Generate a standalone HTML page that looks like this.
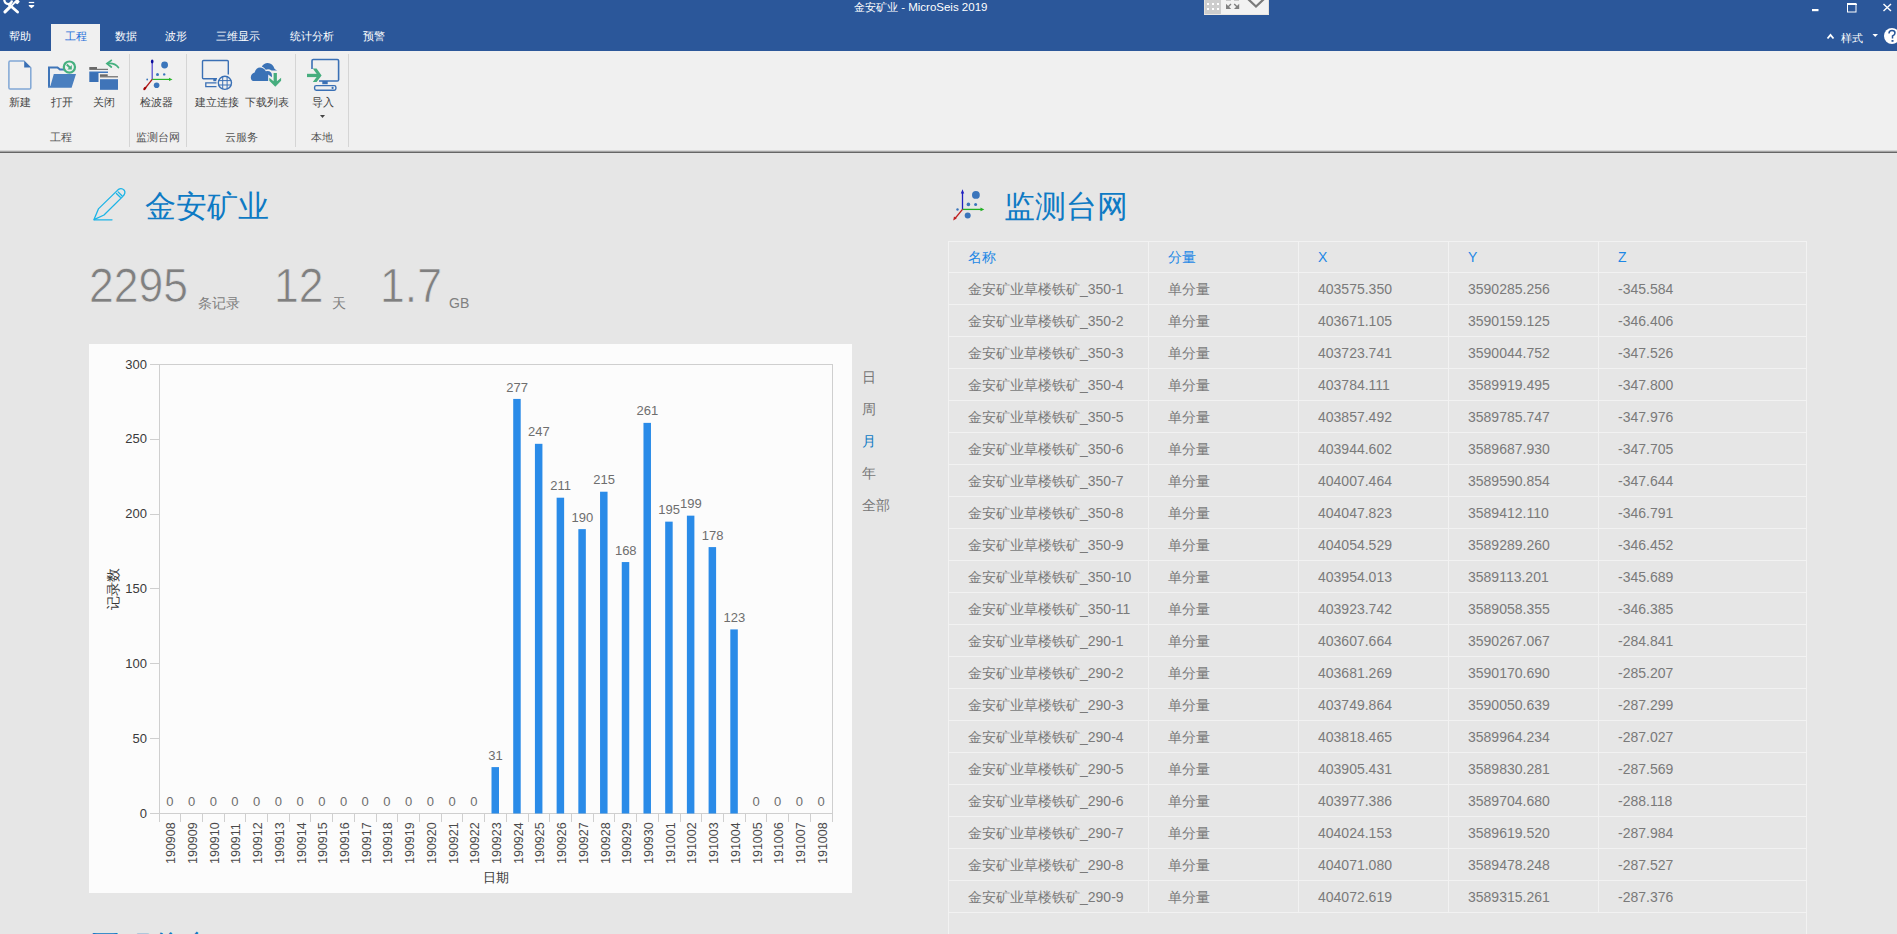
<!DOCTYPE html>
<html><head><meta charset="utf-8">
<style>
*{margin:0;padding:0;box-sizing:border-box}
html,body{width:1897px;height:934px;overflow:hidden;background:#e6e6e6;font-family:"Liberation Sans",sans-serif;position:relative}
.a{position:absolute;white-space:nowrap}
#top{position:absolute;left:0;top:0;width:1897px;height:51px;background:#2b579a}
#ribbon{position:absolute;left:0;top:51px;width:1897px;height:99px;background:#f0f0f0}
#rline{position:absolute;left:0;top:150px;width:1897px;height:3px;background:linear-gradient(#d6d6d6 0,#d6d6d6 1px,#a4a4a4 1px,#a4a4a4 2px,#666 2px,#666 3px)}
.tab{position:absolute;top:28px;font-size:11.3px;color:#fff;line-height:16px}
.rl{position:absolute;top:94px;font-size:11.3px;color:#444;line-height:16px}
.gl{position:absolute;top:129px;font-size:11.3px;color:#555;line-height:16px}
.sep{position:absolute;top:54px;width:1px;height:93px;background:#d5d5d5}
.th{position:absolute;top:248px;font-size:14px;color:#1e88e5;line-height:18px;white-space:nowrap}
.td{position:absolute;font-size:14px;color:#7a7a7a;line-height:17px;white-space:nowrap}
.vl{font-family:"Liberation Sans",sans-serif;font-size:13px;fill:#6e6e6e}
.xl{font-family:"Liberation Sans",sans-serif;font-size:12.5px;fill:#4a4a4a}
.yl{font-family:"Liberation Sans",sans-serif;font-size:13px;fill:#3a3a3a}
.al{font-family:"Liberation Sans",sans-serif;font-size:13px;fill:#3a3a3a}
.side{position:absolute;left:862px;font-size:14px;color:#777;line-height:16px}
</style></head><body>
<div id="top"></div>
<div id="ribbon"></div>
<div id="rline"></div>
<!-- title -->
<div class="a" style="left:854px;top:0px;font-size:11.3px;color:#fff;line-height:15px">金安矿业 <span style="font-size:11.5px">- MicroSeis 2019</span></div>
<!-- tabs -->
<div class="a" style="left:51px;top:24px;width:49px;height:27px;background:#f0f0f0"></div>
<div class="tab" style="left:9px">帮助</div>
<div class="tab" style="left:65px;color:#1e6fd9">工程</div>
<div class="tab" style="left:115px">数据</div>
<div class="tab" style="left:165px">波形</div>
<div class="tab" style="left:216px">三维显示</div>
<div class="tab" style="left:290px">统计分析</div>
<div class="tab" style="left:363px">预警</div>
<!-- ribbon labels -->
<div class="rl" style="left:9px">新建</div>
<div class="rl" style="left:51px">打开</div>
<div class="rl" style="left:93px">关闭</div>
<div class="rl" style="left:140px">检波器</div>
<div class="rl" style="left:195px">建立连接</div>
<div class="rl" style="left:245px">下载列表</div>
<div class="rl" style="left:312px">导入</div>
<div class="gl" style="left:50px">工程</div>
<div class="gl" style="left:136px">监测台网</div>
<div class="gl" style="left:225px">云服务</div>
<div class="gl" style="left:311px">本地</div>
<div class="sep" style="left:129px"></div>
<div class="sep" style="left:186px"></div>
<div class="sep" style="left:295px"></div>
<div class="sep" style="left:348px"></div>

<!-- headings -->
<div class="a" style="left:145px;top:187px;font-size:31.2px;color:#0e7ac4;line-height:40px">金安矿业</div>
<div class="a" style="left:1004px;top:187px;font-size:31.2px;color:#0e7ac4;line-height:40px">监测台网</div>
<div class="a" style="left:89px;top:260px;font-size:48.4px;color:#808080;line-height:50px;transform:scaleX(.92);transform-origin:0 0;-webkit-text-stroke:0.7px #e6e6e6">2295</div>
<div class="a" style="left:198px;top:295px;font-size:14px;color:#808080;line-height:16px">条记录</div>
<div class="a" style="left:274px;top:260px;font-size:48.4px;color:#808080;line-height:50px;transform:scaleX(.92);transform-origin:0 0;-webkit-text-stroke:0.7px #e6e6e6">12</div>
<div class="a" style="left:332px;top:295px;font-size:14px;color:#808080;line-height:16px">天</div>
<div class="a" style="left:380px;top:260px;font-size:48.4px;color:#808080;line-height:50px;transform:scaleX(.92);transform-origin:0 0;-webkit-text-stroke:0.7px #e6e6e6">1.7</div>
<div class="a" style="left:449px;top:295px;font-size:14px;color:#808080;line-height:16px">GB</div>

<!-- chart panel -->
<div class="a" style="left:89px;top:344px;width:763px;height:549px;background:#fcfcfc"></div>

<!-- table -->
<div class="a" style="left:948px;top:241px;width:859px;height:1px;background:#f2f2f2"></div>
<div class="a" style="left:948px;top:241px;width:1px;height:700px;background:#f2f2f2"></div>
<div class="a" style="left:1806px;top:241px;width:1px;height:700px;background:#f2f2f2"></div>
<div class="a" style="left:1148px;top:241px;width:1px;height:672px;background:#f2f2f2"></div>
<div class="a" style="left:1298px;top:241px;width:1px;height:672px;background:#f2f2f2"></div>
<div class="a" style="left:1448px;top:241px;width:1px;height:672px;background:#f2f2f2"></div>
<div class="a" style="left:1598px;top:241px;width:1px;height:672px;background:#f2f2f2"></div>
<div class="a" style="left:948px;top:272px;width:859px;height:1px;background:#f2f2f2"></div>
<div class="a" style="left:948px;top:304px;width:859px;height:1px;background:#f2f2f2"></div>
<div class="a" style="left:948px;top:336px;width:859px;height:1px;background:#f2f2f2"></div>
<div class="a" style="left:948px;top:368px;width:859px;height:1px;background:#f2f2f2"></div>
<div class="a" style="left:948px;top:400px;width:859px;height:1px;background:#f2f2f2"></div>
<div class="a" style="left:948px;top:432px;width:859px;height:1px;background:#f2f2f2"></div>
<div class="a" style="left:948px;top:464px;width:859px;height:1px;background:#f2f2f2"></div>
<div class="a" style="left:948px;top:496px;width:859px;height:1px;background:#f2f2f2"></div>
<div class="a" style="left:948px;top:528px;width:859px;height:1px;background:#f2f2f2"></div>
<div class="a" style="left:948px;top:560px;width:859px;height:1px;background:#f2f2f2"></div>
<div class="a" style="left:948px;top:592px;width:859px;height:1px;background:#f2f2f2"></div>
<div class="a" style="left:948px;top:624px;width:859px;height:1px;background:#f2f2f2"></div>
<div class="a" style="left:948px;top:656px;width:859px;height:1px;background:#f2f2f2"></div>
<div class="a" style="left:948px;top:688px;width:859px;height:1px;background:#f2f2f2"></div>
<div class="a" style="left:948px;top:720px;width:859px;height:1px;background:#f2f2f2"></div>
<div class="a" style="left:948px;top:752px;width:859px;height:1px;background:#f2f2f2"></div>
<div class="a" style="left:948px;top:784px;width:859px;height:1px;background:#f2f2f2"></div>
<div class="a" style="left:948px;top:816px;width:859px;height:1px;background:#f2f2f2"></div>
<div class="a" style="left:948px;top:848px;width:859px;height:1px;background:#f2f2f2"></div>
<div class="a" style="left:948px;top:880px;width:859px;height:1px;background:#f2f2f2"></div>
<div class="a" style="left:948px;top:912px;width:859px;height:1px;background:#f2f2f2"></div>
<div class="th" style="left:968px">名称</div>
<div class="th" style="left:1168px">分量</div>
<div class="th" style="left:1318px">X</div>
<div class="th" style="left:1468px">Y</div>
<div class="th" style="left:1618px">Z</div>
<div class="td" style="left:968px;top:281px">金安矿业草楼铁矿_350-1</div>
<div class="td" style="left:1168px;top:281px">单分量</div>
<div class="td" style="left:1318px;top:281px">403575.350</div>
<div class="td" style="left:1468px;top:281px">3590285.256</div>
<div class="td" style="left:1618px;top:281px">-345.584</div>
<div class="td" style="left:968px;top:313px">金安矿业草楼铁矿_350-2</div>
<div class="td" style="left:1168px;top:313px">单分量</div>
<div class="td" style="left:1318px;top:313px">403671.105</div>
<div class="td" style="left:1468px;top:313px">3590159.125</div>
<div class="td" style="left:1618px;top:313px">-346.406</div>
<div class="td" style="left:968px;top:345px">金安矿业草楼铁矿_350-3</div>
<div class="td" style="left:1168px;top:345px">单分量</div>
<div class="td" style="left:1318px;top:345px">403723.741</div>
<div class="td" style="left:1468px;top:345px">3590044.752</div>
<div class="td" style="left:1618px;top:345px">-347.526</div>
<div class="td" style="left:968px;top:377px">金安矿业草楼铁矿_350-4</div>
<div class="td" style="left:1168px;top:377px">单分量</div>
<div class="td" style="left:1318px;top:377px">403784.111</div>
<div class="td" style="left:1468px;top:377px">3589919.495</div>
<div class="td" style="left:1618px;top:377px">-347.800</div>
<div class="td" style="left:968px;top:409px">金安矿业草楼铁矿_350-5</div>
<div class="td" style="left:1168px;top:409px">单分量</div>
<div class="td" style="left:1318px;top:409px">403857.492</div>
<div class="td" style="left:1468px;top:409px">3589785.747</div>
<div class="td" style="left:1618px;top:409px">-347.976</div>
<div class="td" style="left:968px;top:441px">金安矿业草楼铁矿_350-6</div>
<div class="td" style="left:1168px;top:441px">单分量</div>
<div class="td" style="left:1318px;top:441px">403944.602</div>
<div class="td" style="left:1468px;top:441px">3589687.930</div>
<div class="td" style="left:1618px;top:441px">-347.705</div>
<div class="td" style="left:968px;top:473px">金安矿业草楼铁矿_350-7</div>
<div class="td" style="left:1168px;top:473px">单分量</div>
<div class="td" style="left:1318px;top:473px">404007.464</div>
<div class="td" style="left:1468px;top:473px">3589590.854</div>
<div class="td" style="left:1618px;top:473px">-347.644</div>
<div class="td" style="left:968px;top:505px">金安矿业草楼铁矿_350-8</div>
<div class="td" style="left:1168px;top:505px">单分量</div>
<div class="td" style="left:1318px;top:505px">404047.823</div>
<div class="td" style="left:1468px;top:505px">3589412.110</div>
<div class="td" style="left:1618px;top:505px">-346.791</div>
<div class="td" style="left:968px;top:537px">金安矿业草楼铁矿_350-9</div>
<div class="td" style="left:1168px;top:537px">单分量</div>
<div class="td" style="left:1318px;top:537px">404054.529</div>
<div class="td" style="left:1468px;top:537px">3589289.260</div>
<div class="td" style="left:1618px;top:537px">-346.452</div>
<div class="td" style="left:968px;top:569px">金安矿业草楼铁矿_350-10</div>
<div class="td" style="left:1168px;top:569px">单分量</div>
<div class="td" style="left:1318px;top:569px">403954.013</div>
<div class="td" style="left:1468px;top:569px">3589113.201</div>
<div class="td" style="left:1618px;top:569px">-345.689</div>
<div class="td" style="left:968px;top:601px">金安矿业草楼铁矿_350-11</div>
<div class="td" style="left:1168px;top:601px">单分量</div>
<div class="td" style="left:1318px;top:601px">403923.742</div>
<div class="td" style="left:1468px;top:601px">3589058.355</div>
<div class="td" style="left:1618px;top:601px">-346.385</div>
<div class="td" style="left:968px;top:633px">金安矿业草楼铁矿_290-1</div>
<div class="td" style="left:1168px;top:633px">单分量</div>
<div class="td" style="left:1318px;top:633px">403607.664</div>
<div class="td" style="left:1468px;top:633px">3590267.067</div>
<div class="td" style="left:1618px;top:633px">-284.841</div>
<div class="td" style="left:968px;top:665px">金安矿业草楼铁矿_290-2</div>
<div class="td" style="left:1168px;top:665px">单分量</div>
<div class="td" style="left:1318px;top:665px">403681.269</div>
<div class="td" style="left:1468px;top:665px">3590170.690</div>
<div class="td" style="left:1618px;top:665px">-285.207</div>
<div class="td" style="left:968px;top:697px">金安矿业草楼铁矿_290-3</div>
<div class="td" style="left:1168px;top:697px">单分量</div>
<div class="td" style="left:1318px;top:697px">403749.864</div>
<div class="td" style="left:1468px;top:697px">3590050.639</div>
<div class="td" style="left:1618px;top:697px">-287.299</div>
<div class="td" style="left:968px;top:729px">金安矿业草楼铁矿_290-4</div>
<div class="td" style="left:1168px;top:729px">单分量</div>
<div class="td" style="left:1318px;top:729px">403818.465</div>
<div class="td" style="left:1468px;top:729px">3589964.234</div>
<div class="td" style="left:1618px;top:729px">-287.027</div>
<div class="td" style="left:968px;top:761px">金安矿业草楼铁矿_290-5</div>
<div class="td" style="left:1168px;top:761px">单分量</div>
<div class="td" style="left:1318px;top:761px">403905.431</div>
<div class="td" style="left:1468px;top:761px">3589830.281</div>
<div class="td" style="left:1618px;top:761px">-287.569</div>
<div class="td" style="left:968px;top:793px">金安矿业草楼铁矿_290-6</div>
<div class="td" style="left:1168px;top:793px">单分量</div>
<div class="td" style="left:1318px;top:793px">403977.386</div>
<div class="td" style="left:1468px;top:793px">3589704.680</div>
<div class="td" style="left:1618px;top:793px">-288.118</div>
<div class="td" style="left:968px;top:825px">金安矿业草楼铁矿_290-7</div>
<div class="td" style="left:1168px;top:825px">单分量</div>
<div class="td" style="left:1318px;top:825px">404024.153</div>
<div class="td" style="left:1468px;top:825px">3589619.520</div>
<div class="td" style="left:1618px;top:825px">-287.984</div>
<div class="td" style="left:968px;top:857px">金安矿业草楼铁矿_290-8</div>
<div class="td" style="left:1168px;top:857px">单分量</div>
<div class="td" style="left:1318px;top:857px">404071.080</div>
<div class="td" style="left:1468px;top:857px">3589478.248</div>
<div class="td" style="left:1618px;top:857px">-287.527</div>
<div class="td" style="left:968px;top:889px">金安矿业草楼铁矿_290-9</div>
<div class="td" style="left:1168px;top:889px">单分量</div>
<div class="td" style="left:1318px;top:889px">404072.619</div>
<div class="td" style="left:1468px;top:889px">3589315.261</div>
<div class="td" style="left:1618px;top:889px">-287.376</div>
<svg class="a" style="left:0;top:0" width="1897" height="934" viewBox="0 0 1897 934">
<path d="M159.5 364V813.5M150 364.5H833M832.5 364V822M150 813.5H833" stroke="#cfcfcf" stroke-width="1" fill="none"/>
<path d="M150 738.5H159" stroke="#cfcfcf" stroke-width="1"/>
<path d="M150 663.5H159" stroke="#cfcfcf" stroke-width="1"/>
<path d="M150 588.5H159" stroke="#cfcfcf" stroke-width="1"/>
<path d="M150 514.5H159" stroke="#cfcfcf" stroke-width="1"/>
<path d="M150 439.5H159" stroke="#cfcfcf" stroke-width="1"/>
<path d="M159.5 813.5V822" stroke="#cfcfcf" stroke-width="1"/>
<path d="M180.5 813.5V822" stroke="#cfcfcf" stroke-width="1"/>
<path d="M202.5 813.5V822" stroke="#cfcfcf" stroke-width="1"/>
<path d="M224.5 813.5V822" stroke="#cfcfcf" stroke-width="1"/>
<path d="M245.5 813.5V822" stroke="#cfcfcf" stroke-width="1"/>
<path d="M267.5 813.5V822" stroke="#cfcfcf" stroke-width="1"/>
<path d="M289.5 813.5V822" stroke="#cfcfcf" stroke-width="1"/>
<path d="M310.5 813.5V822" stroke="#cfcfcf" stroke-width="1"/>
<path d="M332.5 813.5V822" stroke="#cfcfcf" stroke-width="1"/>
<path d="M354.5 813.5V822" stroke="#cfcfcf" stroke-width="1"/>
<path d="M376.5 813.5V822" stroke="#cfcfcf" stroke-width="1"/>
<path d="M397.5 813.5V822" stroke="#cfcfcf" stroke-width="1"/>
<path d="M419.5 813.5V822" stroke="#cfcfcf" stroke-width="1"/>
<path d="M441.5 813.5V822" stroke="#cfcfcf" stroke-width="1"/>
<path d="M462.5 813.5V822" stroke="#cfcfcf" stroke-width="1"/>
<path d="M484.5 813.5V822" stroke="#cfcfcf" stroke-width="1"/>
<path d="M506.5 813.5V822" stroke="#cfcfcf" stroke-width="1"/>
<path d="M528.5 813.5V822" stroke="#cfcfcf" stroke-width="1"/>
<path d="M549.5 813.5V822" stroke="#cfcfcf" stroke-width="1"/>
<path d="M571.5 813.5V822" stroke="#cfcfcf" stroke-width="1"/>
<path d="M593.5 813.5V822" stroke="#cfcfcf" stroke-width="1"/>
<path d="M614.5 813.5V822" stroke="#cfcfcf" stroke-width="1"/>
<path d="M636.5 813.5V822" stroke="#cfcfcf" stroke-width="1"/>
<path d="M658.5 813.5V822" stroke="#cfcfcf" stroke-width="1"/>
<path d="M680.5 813.5V822" stroke="#cfcfcf" stroke-width="1"/>
<path d="M701.5 813.5V822" stroke="#cfcfcf" stroke-width="1"/>
<path d="M723.5 813.5V822" stroke="#cfcfcf" stroke-width="1"/>
<path d="M745.5 813.5V822" stroke="#cfcfcf" stroke-width="1"/>
<path d="M766.5 813.5V822" stroke="#cfcfcf" stroke-width="1"/>
<path d="M788.5 813.5V822" stroke="#cfcfcf" stroke-width="1"/>
<path d="M810.5 813.5V822" stroke="#cfcfcf" stroke-width="1"/>
<path d="M832.5 813.5V822" stroke="#cfcfcf" stroke-width="1"/>
<text x="169.85" y="806.10" class="vl" text-anchor="middle">0</text>
<text transform="translate(175.35,864) rotate(-90)" class="xl">190908</text>
<text x="191.56" y="806.10" class="vl" text-anchor="middle">0</text>
<text transform="translate(197.06,864) rotate(-90)" class="xl">190909</text>
<text x="213.27" y="806.10" class="vl" text-anchor="middle">0</text>
<text transform="translate(218.77,864) rotate(-90)" class="xl">190910</text>
<text x="234.98" y="806.10" class="vl" text-anchor="middle">0</text>
<text transform="translate(240.48,864) rotate(-90)" class="xl">190911</text>
<text x="256.69" y="806.10" class="vl" text-anchor="middle">0</text>
<text transform="translate(262.19,864) rotate(-90)" class="xl">190912</text>
<text x="278.40" y="806.10" class="vl" text-anchor="middle">0</text>
<text transform="translate(283.90,864) rotate(-90)" class="xl">190913</text>
<text x="300.11" y="806.10" class="vl" text-anchor="middle">0</text>
<text transform="translate(305.61,864) rotate(-90)" class="xl">190914</text>
<text x="321.82" y="806.10" class="vl" text-anchor="middle">0</text>
<text transform="translate(327.32,864) rotate(-90)" class="xl">190915</text>
<text x="343.53" y="806.10" class="vl" text-anchor="middle">0</text>
<text transform="translate(349.03,864) rotate(-90)" class="xl">190916</text>
<text x="365.24" y="806.10" class="vl" text-anchor="middle">0</text>
<text transform="translate(370.74,864) rotate(-90)" class="xl">190917</text>
<text x="386.95" y="806.10" class="vl" text-anchor="middle">0</text>
<text transform="translate(392.45,864) rotate(-90)" class="xl">190918</text>
<text x="408.66" y="806.10" class="vl" text-anchor="middle">0</text>
<text transform="translate(414.16,864) rotate(-90)" class="xl">190919</text>
<text x="430.37" y="806.10" class="vl" text-anchor="middle">0</text>
<text transform="translate(435.87,864) rotate(-90)" class="xl">190920</text>
<text x="452.08" y="806.10" class="vl" text-anchor="middle">0</text>
<text transform="translate(457.58,864) rotate(-90)" class="xl">190921</text>
<text x="473.79" y="806.10" class="vl" text-anchor="middle">0</text>
<text transform="translate(479.29,864) rotate(-90)" class="xl">190922</text>
<rect x="491.50" y="767.10" width="7.5" height="46.40" fill="#2a8be8"/>
<text x="495.50" y="759.70" class="vl" text-anchor="middle">31</text>
<text transform="translate(501.00,864) rotate(-90)" class="xl">190923</text>
<rect x="513.21" y="398.92" width="7.5" height="414.58" fill="#2a8be8"/>
<text x="517.21" y="391.52" class="vl" text-anchor="middle">277</text>
<text transform="translate(522.71,864) rotate(-90)" class="xl">190924</text>
<rect x="534.92" y="443.82" width="7.5" height="369.68" fill="#2a8be8"/>
<text x="538.92" y="436.42" class="vl" text-anchor="middle">247</text>
<text transform="translate(544.42,864) rotate(-90)" class="xl">190925</text>
<rect x="556.63" y="497.70" width="7.5" height="315.80" fill="#2a8be8"/>
<text x="560.63" y="490.30" class="vl" text-anchor="middle">211</text>
<text transform="translate(566.13,864) rotate(-90)" class="xl">190926</text>
<rect x="578.34" y="529.13" width="7.5" height="284.37" fill="#2a8be8"/>
<text x="582.34" y="521.73" class="vl" text-anchor="middle">190</text>
<text transform="translate(587.84,864) rotate(-90)" class="xl">190927</text>
<rect x="600.05" y="491.72" width="7.5" height="321.78" fill="#2a8be8"/>
<text x="604.05" y="484.32" class="vl" text-anchor="middle">215</text>
<text transform="translate(609.55,864) rotate(-90)" class="xl">190928</text>
<rect x="621.76" y="562.06" width="7.5" height="251.44" fill="#2a8be8"/>
<text x="625.76" y="554.66" class="vl" text-anchor="middle">168</text>
<text transform="translate(631.26,864) rotate(-90)" class="xl">190929</text>
<rect x="643.47" y="422.87" width="7.5" height="390.63" fill="#2a8be8"/>
<text x="647.47" y="415.47" class="vl" text-anchor="middle">261</text>
<text transform="translate(652.97,864) rotate(-90)" class="xl">190930</text>
<rect x="665.18" y="521.65" width="7.5" height="291.85" fill="#2a8be8"/>
<text x="669.18" y="514.25" class="vl" text-anchor="middle">195</text>
<text transform="translate(674.68,864) rotate(-90)" class="xl">191001</text>
<rect x="686.89" y="515.66" width="7.5" height="297.84" fill="#2a8be8"/>
<text x="690.89" y="508.26" class="vl" text-anchor="middle">199</text>
<text transform="translate(696.39,864) rotate(-90)" class="xl">191002</text>
<rect x="708.60" y="547.09" width="7.5" height="266.41" fill="#2a8be8"/>
<text x="712.60" y="539.69" class="vl" text-anchor="middle">178</text>
<text transform="translate(718.10,864) rotate(-90)" class="xl">191003</text>
<rect x="730.31" y="629.41" width="7.5" height="184.09" fill="#2a8be8"/>
<text x="734.31" y="622.01" class="vl" text-anchor="middle">123</text>
<text transform="translate(739.81,864) rotate(-90)" class="xl">191004</text>
<text x="756.02" y="806.10" class="vl" text-anchor="middle">0</text>
<text transform="translate(761.52,864) rotate(-90)" class="xl">191005</text>
<text x="777.73" y="806.10" class="vl" text-anchor="middle">0</text>
<text transform="translate(783.23,864) rotate(-90)" class="xl">191006</text>
<text x="799.44" y="806.10" class="vl" text-anchor="middle">0</text>
<text transform="translate(804.94,864) rotate(-90)" class="xl">191007</text>
<text x="821.15" y="806.10" class="vl" text-anchor="middle">0</text>
<text transform="translate(826.65,864) rotate(-90)" class="xl">191008</text>
<text x="147" y="818.0" class="yl" text-anchor="end">0</text>
<text x="147" y="743.1" class="yl" text-anchor="end">50</text>
<text x="147" y="668.2" class="yl" text-anchor="end">100</text>
<text x="147" y="593.2" class="yl" text-anchor="end">150</text>
<text x="147" y="518.3" class="yl" text-anchor="end">200</text>
<text x="147" y="443.4" class="yl" text-anchor="end">250</text>
<text x="147" y="368.5" class="yl" text-anchor="end">300</text>
<text transform="translate(117.5,609.5) rotate(-90)" class="al" style="font-size:14px">记录数</text>
<text x="483" y="882" class="al">日期</text>
</svg>
<div class="side" style="top:369px">日</div>
<div class="side" style="top:401px">周</div>
<div class="side" style="top:433px;color:#0e7ac4">月</div>
<div class="side" style="top:465px">年</div>
<div class="side" style="top:497px">全部</div>
<div class="a" style="left:90px;top:927px;font-size:31.2px;color:#0e7ac4;line-height:40px">工程信息</div>
<div class="a" style="left:1841px;top:31px;font-size:11px;color:#fff;line-height:14px">样式</div>
<svg class="a" style="left:0;top:0" width="1897" height="160" viewBox="0 0 1897 160">
 <!-- tools icon -->
 <path d="M9 4.5 L17.6 12" stroke="#fff" stroke-width="2.8" stroke-linecap="round"/>
 <path d="M4.2 -0.5 Q4.5 3.8 8.6 4.2 Q11.4 4 12 0.5" stroke="#fff" stroke-width="2.2" fill="none"/>
 <path d="M5 11.8 L9.8 7.2" stroke="#fff" stroke-width="3.2" stroke-linecap="round"/>
 <path d="M9.5 7.5 L14.5 2.8" stroke="#fff" stroke-width="1.8"/>
 <path d="M13.2 2.6 L16.5 -0.5 L18.2 -0.2 L19.8 1.8 L17.6 4.2 L15.8 3.6Z" fill="#fff"/>
 <rect x="28.8" y="1.9" width="5.4" height="1.2" fill="#fff"/>
 <path d="M28.8 4.9 H34.2 V5.9 L31.5 8.2 L28.8 5.9Z" fill="#fff"/>
 <!-- layout widget -->
 <rect x="1204" y="0" width="65" height="15" fill="#f2f2f2"/>
 <rect x="1204" y="0" width="17" height="14" fill="#cdcdcd"/>
 <path d="M1204.5 0V15M1268.5 0V15" stroke="#e4e0da" stroke-width="1"/>
 <path d="M1204 14.5H1269" stroke="#ece8e2" stroke-width="1"/>
 <g fill="#fff"><rect x="1207" y="3" width="2" height="2"/><rect x="1212" y="3" width="2" height="2"/><rect x="1217" y="3" width="2" height="2"/><rect x="1207" y="8" width="2" height="2"/><rect x="1212" y="8" width="2" height="2"/><rect x="1217" y="8" width="2" height="2"/></g>
 <g fill="#808080"><path d="M1226 3.8V9H1231.2Z M1239.2 3.8V9H1234Z"/></g><path d="M1227.5 7.5L1231 4 M1237.7 7.5L1234.2 4" stroke="#808080" stroke-width="1.4"/><path d="M1226 0.5H1231M1234 0.5H1239" stroke="#c8c8c8" stroke-width="1"/>
 <path d="M1248 -1L1256 6.5L1264 -1" stroke="#7a7a7a" stroke-width="2.2" fill="none"/>
 <!-- window controls -->
 <rect x="1812" y="9" width="6.5" height="2.2" fill="#fff"/>
 <rect x="1847.5" y="3.5" width="8.5" height="8.5" stroke="#fff" stroke-width="1" fill="none"/>
 <path d="M1847 4.5H1857" stroke="#fff" stroke-width="1"/>
 <path d="M1883.5 4L1891 11M1891 4L1883.5 11" stroke="#fff" stroke-width="1.4"/>
 <path d="M1827.5 38.5L1830.5 35L1833.5 38.5" stroke="#fff" stroke-width="1.8" fill="none"/>
 <path d="M1872.5 34H1878L1875.2 37Z" fill="#fff"/>
 <circle cx="1892" cy="36" r="8" fill="#fff"/>
 <path d="M1889 33.5 Q1889 30.5 1892 30.5 Q1895 30.5 1895 33 Q1895 35 1892.5 36 V38.5" stroke="#2b579a" stroke-width="1.5" fill="none"/>
 <rect x="1891.5" y="40" width="2" height="1.8" fill="#2b579a"/>

 <!-- 新建 doc -->
 <path d="M24.3 61.1 H10.2 Q8.9 61.1 8.9 62.4 V87.7 Q8.9 89 10.2 89 H29.5 Q30.8 89 30.8 87.7 V67.5" stroke="#80a7d5" stroke-width="1.5" fill="none"/>
 <path d="M24.2 60.6 L31.3 67.6 H24.2 Z" fill="#3a70b5"/>
 <!-- 打开 folder -->
 <path d="M49 87 V67.4 H57.5 L60 69.6 H64" stroke="#3f75b8" stroke-width="2" fill="none"/>
 <path d="M53.8 74 H76 L71.6 87.8 H48 V86 H50.4Z" fill="#4a7fbf"/>
 <circle cx="69.4" cy="67.1" r="5.6" stroke="#45b07f" stroke-width="2.2" fill="#f0f0f0"/>
 <path d="M66.8 64.5 L70.6 68.3" stroke="#45b07f" stroke-width="2"/>
 <path d="M67.3 69.6 H71.8 V65.1Z" fill="#45b07f"/>
 <!-- 关闭 -->
 <rect x="89.3" y="67" width="7.7" height="2" fill="#6a6a6a"/>
 <rect x="89.3" y="68.8" width="18.7" height="1.1" fill="#6a6a6a"/>
 <rect x="89.3" y="71.5" width="18.7" height="1.5" fill="#3f78c0"/>
 <rect x="89.3" y="72.8" width="9.2" height="9.2" fill="#3a70b5"/>
 <rect x="100" y="74.3" width="7.7" height="2" fill="#6a6a6a"/>
 <rect x="100" y="76.2" width="18" height="1.2" fill="#6a6a6a"/>
 <rect x="100" y="79.2" width="18" height="10.6" fill="#3f74b8"/>
 <path d="M107.5 63.6 Q114.5 62.6 118.4 67.5" stroke="#45b07f" stroke-width="1.8" fill="none" stroke-linecap="round"/>
 <path d="M111.3 60.4 L107 63.6 L111.3 67" stroke="#45b07f" stroke-width="1.8" fill="none" stroke-linecap="round"/>
 <!-- 检波器 -->
 <path d="M152.2 62 V79.5" stroke="#5a4fd0" stroke-width="1.3"/>
 <ellipse cx="152.2" cy="61.5" rx="1.3" ry="1.9" fill="#0a0a9a"/>
 <path d="M152.2 79.4 H170" stroke="#2bb52b" stroke-width="1.2"/>
 <path d="M169 77.8 L172.5 79.4 L169 81Z" fill="#2bb52b"/>
 <path d="M152.2 79.4 L145 88.5" stroke="#b01818" stroke-width="1.3"/>
 <ellipse cx="144.8" cy="88.5" rx="1.2" ry="1.9" transform="rotate(40 144.8 88.5)" fill="#a00000"/>
 <g fill="#3a75bb"><circle cx="164.6" cy="65" r="3.4"/><circle cx="157.5" cy="74.4" r="1.5"/><circle cx="164.2" cy="74.4" r="1.2"/><circle cx="147.2" cy="79.5" r="0.9"/><circle cx="156.6" cy="85.3" r="2.8"/></g>
 <!-- 建立连接 -->
 <path d="M217 78.8 H203.5 Q202.5 78.8 202.5 77.8 V61.5 Q202.5 60.5 203.5 60.5 H227.3 Q228.3 60.5 228.3 61.5 V74.5" stroke="#3a70b5" stroke-width="1.4" fill="none"/>
 <rect x="213.3" y="79" width="3" height="2.2" fill="#3a70b5"/>
 <path d="M216.5 82.8 H205.8 V86.6 H216.5" stroke="#3a70b5" stroke-width="1.3" fill="none"/>
 <circle cx="224.9" cy="82.8" r="6.6" fill="#f0f0f0" stroke="#3a70b5" stroke-width="1.4"/>
 <path d="M218.5 80.6 H231.3 M218.5 85 H231.3 M222.7 76.5 V89 M227.1 76.5 V89" stroke="#3a70b5" stroke-width="1"/>
 <!-- 下载列表 -->
 <path d="M254.5 81 Q250.6 81 250.8 77 Q251.1 73.8 254.6 72.6 Q256.2 67.6 260 67.6 Q263.8 67.7 265.8 71.3 Q269 70.6 271 72.4 Q272.2 73.6 271.9 77.2 L268.2 74.6 V81 Z" fill="#3a72b6"/>
 <path d="M261.8 66.6 Q264 63 267.8 63.1 Q272.6 63.3 274.5 68.8 Q275.6 69.8 277.2 70.6 H271.6 Q268.6 68.4 265.8 69.8 Q264.2 67.4 261.8 66.6Z" fill="#3a72b6" stroke="#f0f0f0" stroke-width="1" paint-order="stroke"/>
 <path d="M273.6 72.9 H276.9 V81.3 L281.1 77.8 V80.8 L275.3 86.8 L269.3 80.8 V77.8 L273.6 81.3Z" fill="#46ad7e" stroke="#f0f0f0" stroke-width="1.2" paint-order="stroke"/>
 <!-- 导入 -->
 <path d="M312 69 V60.8 Q312 59.5 313.3 59.5 H337.3 Q338.6 59.5 338.6 60.8 V79.7 Q338.6 81 337.3 81 H319" stroke="#3a70b5" stroke-width="1.6" fill="none"/>
 <rect x="322.3" y="81" width="5.4" height="3.2" fill="#3a70b5"/>
 <rect x="314.6" y="85.6" width="21.3" height="4.6" rx="1.6" stroke="#3a70b5" stroke-width="1.4" fill="#f0f0f0"/>
 <circle cx="332.6" cy="87.9" r="1.1" fill="#3a70b5"/>
 <rect x="307" y="73.8" width="11" height="3.3" fill="#46ad7e"/>
 <path d="M312.8 68.6 H316.6 L321.6 75.5 L316.6 82 H312.8 L317.8 75.5Z" fill="#46ad7e"/>
 <path d="M320 115 H325 L322.5 118Z" fill="#444"/>
 <!-- pencil heading icon -->
 <g stroke="#1fb7e8" stroke-width="1.2" fill="none" stroke-linejoin="round">
 </g>
</svg>
<svg class="a" style="left:0;top:160px" width="1000" height="80" viewBox="0 160 1000 80">
 <g stroke="#1cb4e6" stroke-width="1.3" fill="none" stroke-linejoin="round" stroke-linecap="round">
  <path d="M94 219.8 H112"/>
  <path d="M94 219.6 L98.4 208.9 L118.2 189.6 Q121.5 187.3 124.2 190.2 Q126.2 193.3 122.6 196.6 L104 215 Z"/>
  <path d="M116.4 193.5 L120.3 197.3 M118.1 191.9 L121.9 195.7"/>
 </g>
 <path d="M962.5 192 V209.5" stroke="#2020c0" stroke-width="1.3"/>
 <path d="M960.8 193.5 L962.5 189.3 L964.2 193.5Z" fill="#2020c0"/>
 <path d="M962.5 209.4 H981" stroke="#22b022" stroke-width="1.3"/>
 <path d="M980.5 207.6 L984.3 209.4 L980.5 211.2Z" fill="#22b022"/>
 <path d="M962.5 209.4 L955 218.5" stroke="#c02020" stroke-width="1.3"/>
 <path d="M953.2 220.6 L954 216.4 L956.7 218.6Z" fill="#c02020"/>
 <g fill="#3a75bb"><circle cx="975.9" cy="194.9" r="3.9"/><circle cx="968.4" cy="204.4" r="1.8"/><circle cx="975.6" cy="204.4" r="1.5"/><circle cx="957.5" cy="209.5" r="1.2"/><circle cx="967.7" cy="215.4" r="3"/></g>
</svg>

</body></html>
